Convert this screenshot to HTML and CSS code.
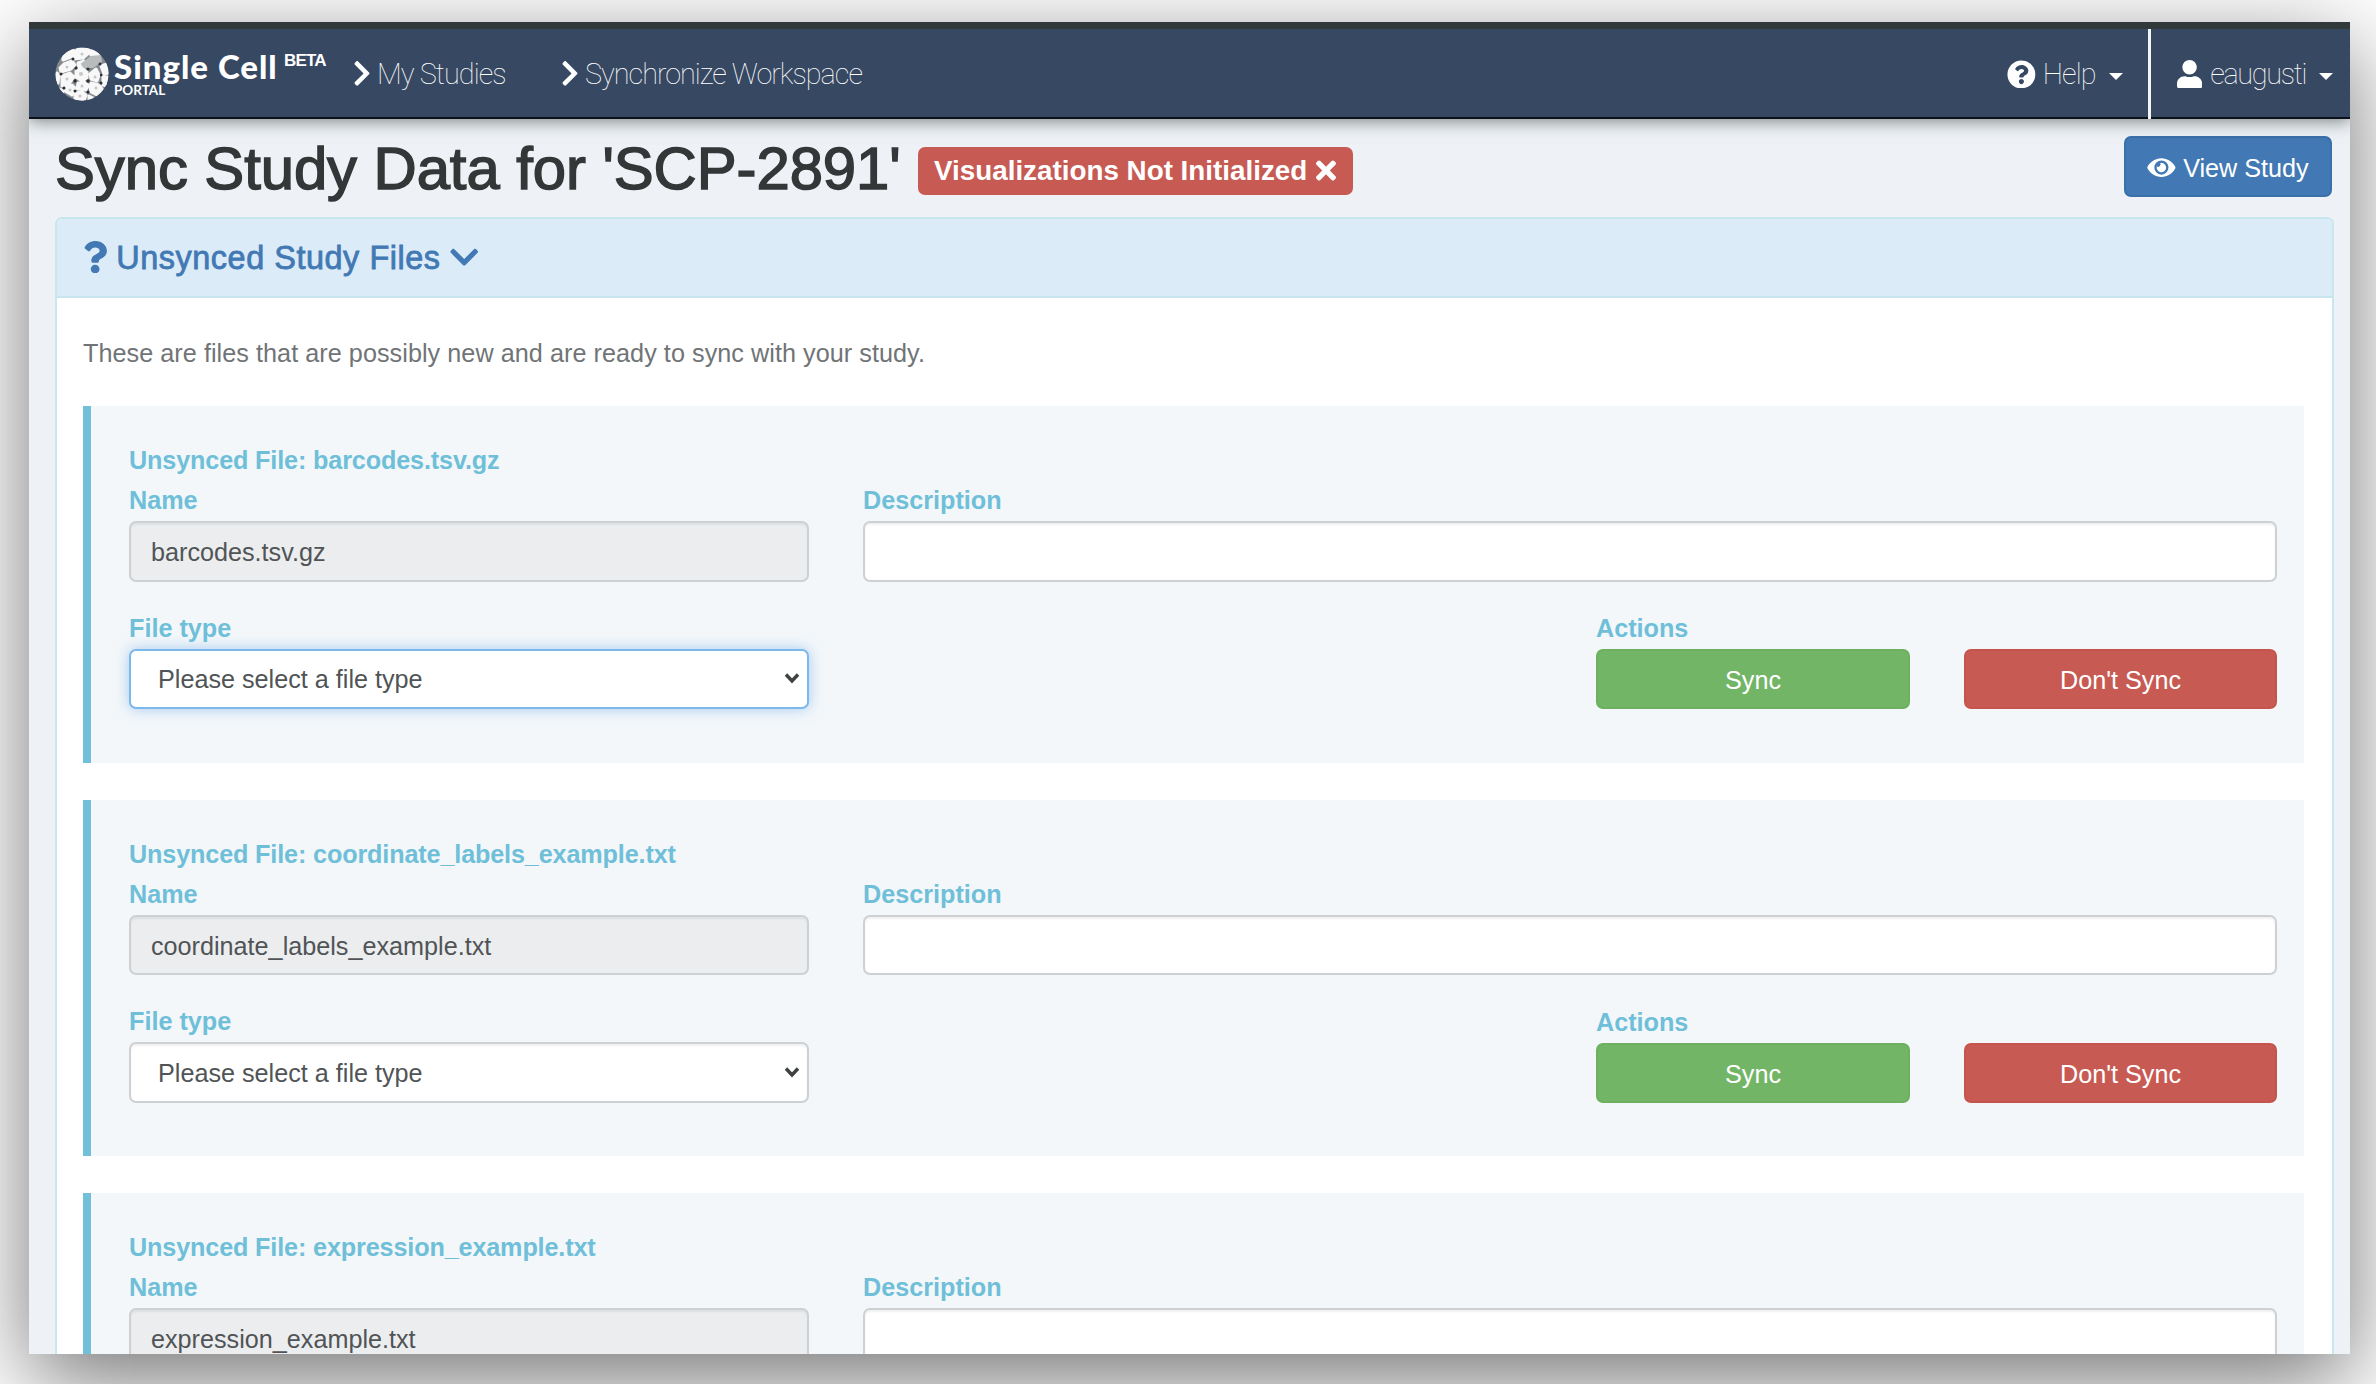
FILE: index.html
```html
<!DOCTYPE html>
<html lang="en">
<head>
<meta charset="utf-8">
<title>Single Cell Portal - Sync Study</title>
<link rel="stylesheet" href="styles.css">
</head>
<body>
<svg class="defs" aria-hidden="true">
  <symbol id="chevron-right" viewBox="0 0 320 512"><path d="M285.476 272.971L91.132 467.314c-9.373 9.373-24.569 9.373-33.941 0l-22.667-22.667c-9.357-9.357-9.375-24.522-.04-33.901L188.505 256 34.484 101.255c-9.335-9.379-9.317-24.544.04-33.901l22.667-22.667c9.373-9.373 24.569-9.373 33.941 0L285.475 239.03c9.373 9.372 9.373 24.568.001 33.941z"/></symbol>
  <symbol id="chevron-down" viewBox="0 0 448 512"><path d="M207.029 381.476L12.686 187.132c-9.373-9.373-9.373-24.569 0-33.941l22.667-22.667c9.357-9.357 24.522-9.375 33.901-.04L224 284.505l154.745-154.021c9.379-9.335 24.544-9.317 33.901.04l22.667 22.667c9.373 9.373 9.373 24.569 0 33.941L240.971 381.476c-9.373 9.372-24.569 9.372-33.942 0z"/></symbol>
  <symbol id="question-circle" viewBox="0 0 512 512"><path d="M504 256c0 136.997-111.043 248-248 248S8 392.997 8 256C8 119.083 119.043 8 256 8s248 111.083 248 248zM262.655 90c-54.497 0-89.255 22.957-116.549 63.758-3.536 5.286-2.353 12.415 2.715 16.258l34.699 26.31c5.205 3.947 12.621 3.008 16.665-2.122 17.864-22.658 30.113-35.797 57.303-35.797 20.429 0 45.698 13.148 45.698 32.958 0 14.976-12.363 22.667-32.534 33.976C247.128 238.528 216 254.941 216 296v4c0 6.627 5.373 12 12 12h56c6.627 0 12-5.373 12-12v-1.333c0-28.462 83.186-29.647 83.186-106.667 0-58.002-60.165-102-116.531-102zM256 338c-25.365 0-46 20.635-46 46 0 25.364 20.635 46 46 46s46-20.636 46-46c0-25.365-20.635-46-46-46z"/></symbol>
  <symbol id="user" viewBox="0 0 448 512"><path d="M224 256c70.7 0 128-57.3 128-128S294.7 0 224 0 96 57.3 96 128s57.3 128 128 128zm89.6 32h-16.700c-22.2 10.2-46.9 16-72.9 16s-50.6-5.800-72.900-16h-16.700C60.200 288 0 348.200 0 422.400V464c0 26.500 21.500 48 48 48h352c26.500 0 48-21.500 48-48v-41.600c0-74.200-60.200-134.400-134.400-134.400z"/></symbol>
  <symbol id="eye" viewBox="0 0 576 512"><path d="M572.52 241.4C518.29 135.59 410.93 64 288 64S57.68 135.64 3.48 241.41a32.35 32.35 0 0 0 0 29.19C57.71 376.41 165.07 448 288 448s230.32-71.64 284.52-177.41a32.35 32.35 0 0 0 0-29.19zM288 400a144 144 0 1 1 144-144 143.93 143.93 0 0 1-144 144zm0-240a95.31 95.31 0 0 0-25.31 3.79 47.85 47.85 0 0 1-66.9 66.9A95.78 95.78 0 1 0 288 160z"/></symbol>
  <symbol id="question" viewBox="0 0 384 512"><path d="M202.021 0C122.202 0 70.503 32.703 29.914 91.026c-7.363 10.58-5.093 25.086 5.178 32.874l43.138 32.709c10.373 7.865 25.132 6.026 33.253-4.148 25.049-31.381 43.63-49.449 82.757-49.449 30.764 0 68.816 19.799 68.816 49.631 0 22.552-18.617 34.134-48.993 51.164-35.423 19.86-82.299 44.576-82.299 106.405V320c0 13.255 10.745 24 24 24h72.471c13.255 0 24-10.745 24-24v-5.773c0-42.86 125.268-44.645 125.268-160.627C377.504 66.256 286.902 0 202.021 0zM192 373.459c-38.196 0-69.271 31.075-69.271 69.271 0 38.195 31.075 69.27 69.271 69.27s69.271-31.075 69.271-69.271-31.075-69.27-69.271-69.27z"/></symbol>
  <symbol id="times" viewBox="0 0 352 512"><path d="M242.72 256l100.07-100.07c12.28-12.28 12.28-32.19 0-44.48l-22.24-22.24c-12.28-12.28-32.19-12.28-44.48 0L176 189.28 75.93 89.21c-12.28-12.28-32.19-12.28-44.48 0L9.21 111.45c-12.28 12.28-12.28 32.19 0 44.48L109.28 256 9.21 356.07c-12.28 12.28-12.28 32.19 0 44.48l22.24 22.24c12.28 12.28 32.2 12.28 44.48 0L176 322.72l100.07 100.07c12.28 12.28 32.2 12.28 44.48 0l22.24-22.24c12.28-12.28 12.28-32.19 0-44.48L242.72 256z"/></symbol>
  <symbol id="select-arrow" viewBox="0 0 16 12"><path d="M2 2.5l6 6.500 6-6.500" fill="none" stroke="#3f4243" stroke-width="3.400"/></symbol>
</svg>
<div class="window">
  <nav class="navbar">
    <a class="brand">
      <svg class="brand-mark" viewBox="0 0 54 54">
        <clipPath id="disc"><circle cx="27" cy="27" r="26.500"/></clipPath>
        <g clip-path="url(#disc)">
          <rect width="54" height="54" fill="#858a8f"/>
          <g fill="#f8f8f8" stroke="#f8f8f8" stroke-width="3" stroke-linejoin="round">
            <path d="M8 7l8-5 4 2-4 6-8 3zM19 7l4-5 11 0 1 3-7 6-9 1zM38 2l7 4-3 3-6-1zM9 17l8-3 3 4-4 4-10 3-1-4zM23 16l6-2 0 4-5 3zM2 26l2 2-1 8-3-4zM7 29l8-3 4 4-5 7-7 2zM21 24l6-3 5 4 0 6-5 3-6-4zM35 27l6-5 3 6-2 6-6-2zM46 19l6-2 2 9-5 1zM48 30l5 0-1 9-4-1zM23 36l6-1 4 3-2 5-9-1zM36 36l8 2 3 4-5 6-6-3-1-5zM11 41l6-3 3 3-3 7-7-4zM20 46l7-1 4 3-2 6-9-1zM5 42l3 2-1 3-3-3zM34 49l4 2-4 3z"/>
          </g>
          <path d="M27 17l9-7 9-1 1 5-8 6-9 0z" fill="#b9bcbd" stroke="#b9bcbd" stroke-width="2"/>
          <g fill="#2b3036"><circle cx="18" cy="12" r="1.500"/><circle cx="21" cy="21" r="1.500"/><circle cx="33" cy="22" r="1.500"/><circle cx="6" cy="27" r="1.500"/><circle cx="20" cy="34" r="1.700"/><circle cx="33" cy="34" r="1.700"/><circle cx="45" cy="17" r="1.500"/><circle cx="46" cy="36" r="1.500"/><circle cx="9" cy="41" r="1.500"/><circle cx="20" cy="44" r="1.500"/><circle cx="33" cy="45" r="1.500"/><circle cx="46" cy="28" r="1.200"/></g>
          <g fill="#c5c7c9"><circle cx="12" cy="20" r="1.500"/><circle cx="26" cy="27" r="2"/><circle cx="12" cy="32" r="1.500"/><circle cx="27" cy="39" r="1.500"/><circle cx="41" cy="41" r="1.500"/><circle cx="15" cy="43" r="1.500"/><circle cx="25" cy="49" r="1.500"/><circle cx="40" cy="30" r="1.500"/><circle cx="27" cy="7" r="1.500"/></g>
        </g>
      </svg>
      <span class="brand-text"><span class="brand-name">Single Cell</span><span class="brand-sub">PORTAL</span></span>
      <span class="beta">BETA</span>
    </a>
    <a class="crumb"><svg class="icon chev"><use href="#chevron-right"/></svg><span class="studies">My Studies</span></a>
    <a class="crumb"><svg class="icon chev"><use href="#chevron-right"/></svg><span class="workspace">Synchronize Workspace</span></a>
    <div class="nav-right">
      <a class="nav-item help"><svg class="icon circle"><use href="#question-circle"/></svg><span class="help-text">Help</span><i class="caret"></i></a>
      <a class="nav-item account"><svg class="icon person"><use href="#user"/></svg><span class="user-text">eaugusti</span><i class="caret"></i></a>
    </div>
  </nav>
  <main class="page">
    <header class="title-row">
      <h1>Sync Study Data for 'SCP-2891'</h1>
      <span class="badge"><span>Visualizations Not Initialized</span><svg class="icon cross"><use href="#times"/></svg></span>
      <a class="btn view"><svg class="icon eye"><use href="#eye"/></svg>View Study</a>
    </header>
    <section class="panel">
      <h2 class="panel-heading"><svg class="icon question"><use href="#question"/></svg><span>Unsynced Study Files</span><svg class="icon down"><use href="#chevron-down"/></svg></h2>
      <div class="panel-body">
        <p class="intro">These are files that are possibly new and are ready to sync with your study.</p>
        <form class="card">
          <h3>Unsynced File: barcodes.tsv.gz</h3>
          <div class="row top"><div><label>Name</label><div class="field readonly">barcodes.tsv.gz</div></div><div><label>Description</label><div class="field"></div></div></div>
          <div class="row bottom"><div><label>File type</label><div class="field select focused"><span>Please select a file type</span><svg class="arrow"><use href="#select-arrow"/></svg></div></div><div><label>Actions</label><a class="btn sync">Sync</a></div><div><a class="btn skip">Don't Sync</a></div></div>
        </form>
        <form class="card">
          <h3>Unsynced File: coordinate_labels_example.txt</h3>
          <div class="row top"><div><label>Name</label><div class="field readonly">coordinate_labels_example.txt</div></div><div><label>Description</label><div class="field"></div></div></div>
          <div class="row bottom"><div><label>File type</label><div class="field select"><span>Please select a file type</span><svg class="arrow"><use href="#select-arrow"/></svg></div></div><div><label>Actions</label><a class="btn sync">Sync</a></div><div><a class="btn skip">Don't Sync</a></div></div>
        </form>
        <form class="card">
          <h3>Unsynced File: expression_example.txt</h3>
          <div class="row top"><div><label>Name</label><div class="field readonly">expression_example.txt</div></div><div><label>Description</label><div class="field"></div></div></div>
        </form>
      </div>
    </section>
  </main>
</div>
</body>
</html>
```

FILE: styles.css
```css
* { box-sizing: border-box; }
body {
  margin: 0;
  height: 1384px;
  overflow: hidden;
  padding: 22px 26px 30px 29px;
  background: #fff;
  font-family: "Liberation Sans", Arial, sans-serif;
  font-size: 25.2px;
  color: #333738;
}
h1, h2, h3, p { margin: 0; font-weight: normal; }
.defs { position: absolute; width: 0; height: 0; }
.icon { display: block; flex: none; fill: currentColor; }

.window {
  height: 1332px;
  overflow: hidden;
  background: #eef2f6;
  box-shadow: 0 26px 86px rgba(0, 0, 0, .55);
}

/* Navigation */
.navbar {
  position: relative;
  display: flex;
  height: 97px;
  padding-left: 26px;
  border-top: 7px solid #31393b;
  border-bottom: 2px solid #0c121b;
  background: #374862;
  color: #fff;
  box-shadow: 0 2px 16px rgba(40, 50, 45, .6);
}
.brand { display: flex; width: 298px; padding-top: 18px; }
.brand-mark { width: 54px; height: 54px; flex: none; }
.brand-text { display: flex; flex-direction: column; width: 163px; margin-left: 5px; white-space: nowrap; }
.brand-name {
  height: 32px;
  padding-top: 3px;
  font: 900 33px/32px Lato, sans-serif;
  letter-spacing: 1px;
}
.brand-sub { font: 700 13.5px/18px Lato, sans-serif; padding-top: 2px; }
.beta { margin-left: 7px; font-weight: bold; font-size: 17px; line-height: 28px; letter-spacing: -.8px; }
.crumb { display: flex; align-items: center; height: 89px; font: 100 28.8px/88px Roboto, "Liberation Sans", sans-serif; }
.chev { width: 18px; height: 28.8px; margin-right: 6px; }
.studies { width: 184px; letter-spacing: -.9px; }
.workspace { white-space: nowrap; letter-spacing: -1px; }
.nav-right { display: flex; margin-left: auto; font: 100 28.8px/88px Roboto, "Liberation Sans", sans-serif; }
.nav-item { display: flex; align-items: center; height: 90px; }
.help { width: 141px; }
.account { width: 202px; padding-left: 26px; border-left: 3px solid #f3f5f7; }
.circle { width: 28.8px; height: 28.8px; margin-right: 7px; }
.person { width: 25.2px; height: 28.8px; margin-right: 8px; }
.help-text { width: 66px; letter-spacing: -.9px; }
.user-text { width: 109px; letter-spacing: -1.3px; }
.caret { margin-top: 5px; border: 7px solid transparent; border-top-color: #fff; border-bottom: 0; }

/* Page header */
.page { padding: 17px 16px 0 26px; }
.title-row { display: flex; align-items: flex-start; height: 81px; }
h1 {
  width: 863px;
  font-size: 59.8px;
  line-height: 66px;
  letter-spacing: -.05px;
  white-space: nowrap;
  -webkit-text-stroke: 1.5px currentColor;
}
.badge {
  display: flex;
  align-items: center;
  width: 435px;
  height: 48px;
  margin-top: 11px;
  padding-left: 16px;
  border-radius: 7px;
  background: #c75b54;
  color: #fff;
  font-size: 27.8px;
  font-weight: bold;
  white-space: nowrap;
}
.cross { width: 20px; height: 29px; margin-left: 9px; margin-top: -2px; }
.badge > span { margin-top: -1px; }
.btn {
  display: flex;
  align-items: center;
  justify-content: center;
  height: 60px;
  border-radius: 7px;
  color: #fff;
}
.view { width: 208px; height: 61px; margin-left: auto; margin-right: 2px; padding-top: 4px; border: 2px solid #3a70aa; background: #4279b4; }
.eye { width: 28.8px; height: 25.2px; margin: -2px 7px 0 0; }

/* Panel */
.panel { border: 2px solid #c8e6ee; border-radius: 7px; background: #fff; overflow: hidden; }
.panel-heading {
  display: flex;
  align-items: center;
  height: 79px;
  padding: 1px 0 0 26px;
  border-bottom: 2px solid #c8e4ef;
  background: #dbebf7;
  color: #4279b4;
  font-size: 32.4px;
  letter-spacing: .55px;
  -webkit-text-stroke: .8px currentColor;
}
.question { width: 24.3px; height: 32.4px; margin: -2px 9px 0 0; }
.down { width: 28.4px; height: 32.4px; margin: -2px 0 0 9px; }
.panel-body { padding: 35px 28px 0 26px; }
.intro { height: 73px; line-height: 40px; letter-spacing: .05px; color: #707476; }

/* File cards */
.card {
  height: 356.5px;
  margin-bottom: 37px;
  padding: 36px 27px 0 38px;
  border-left: 8px solid #72bfd8;
  background: #f3f7fa;
}
.card h3 { height: 37px; line-height: 37px; font-size: 25.2px; font-weight: bold; letter-spacing: -.14px; color: #6fbfd9; }
.row { display: grid; align-items: end; }
.top { grid-template-columns: 680px 1414px; column-gap: 54px; }
.bottom { grid-template-columns: 680px 314px 313px; column-gap: 0; margin-top: 25px; }
.bottom > :nth-child(2) { margin-left: 787px; width: 314px; }
.bottom { grid-template-columns: 680px 1101px 367px; }
.bottom > :nth-child(3) { margin-left: 54px; width: 313px; }
label { display: block; height: 42px; line-height: 43px; font-weight: bold; color: #6fbfd9; }
.field {
  height: 60.5px;
  padding: 2px 0 0 20px;
  border: 2px solid #cdd1d3;
  border-radius: 7px;
  background: #fff;
  box-shadow: inset 0 2px 2px rgba(0, 0, 0, .06);
  color: #505456;
  line-height: 55px;
}
.readonly { background: #ecedef; }
.select { display: flex; align-items: center; padding-left: 27px; }
.focused { border-color: #7ab8ee; box-shadow: 0 0 14px rgba(102, 165, 230, .55); }
.arrow { width: 16px; height: 12px; margin: -3px 7px 0 auto; }
.sync { background: #73b567; border: 2px solid #6cb060; }
.skip { background: #c75b54; border: 2px solid #c6544e; }
.sync, .skip { padding-top: 3px; }
```
